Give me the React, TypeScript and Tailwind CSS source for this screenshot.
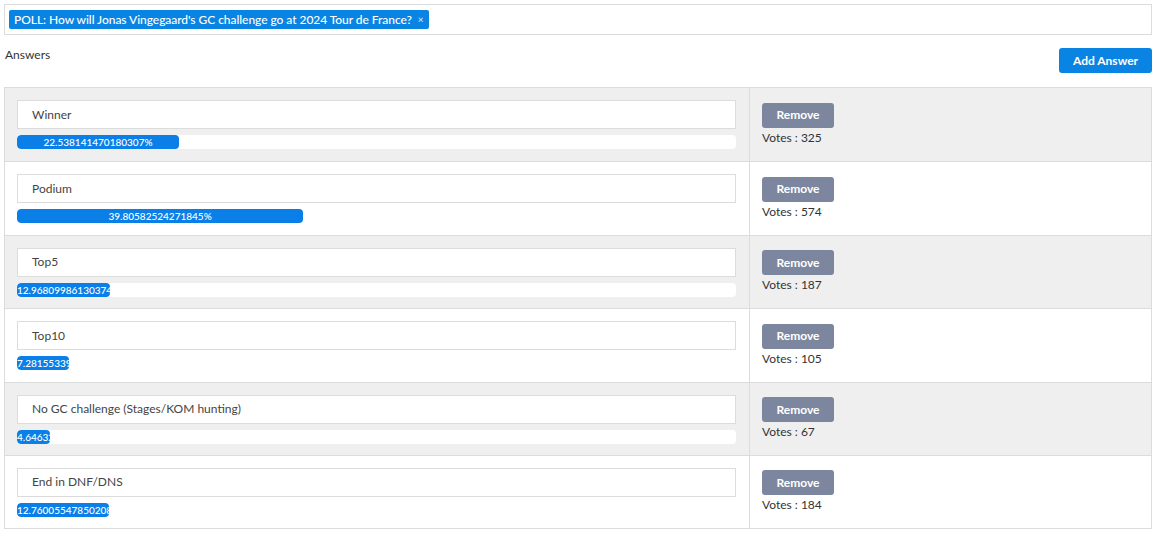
import React from "react";

const rows = [
  { label: "Winner", pct: 22.538141470180307, text: "22.538141470180307%", votes: 325 },
  { label: "Podium", pct: 39.80582524271845, text: "39.80582524271845%", votes: 574 },
  { label: "Top5", pct: 12.968099861303745, text: "12.968099861303745", votes: 187 },
  { label: "Top10", pct: 7.281553398058252, text: "7.281553398058252", votes: 105 },
  { label: "No GC challenge (Stages/KOM hunting)", pct: 4.646324549237171, text: "4.646324549237171", votes: 67 },
  { label: "End in DNF/DNS", pct: 12.760055478502081, text: "12.760055478502081", votes: 184 },
];

export default function App() {
  return (
    <div className="w-[1165px] h-[539px] bg-white text-[#333] overflow-hidden" style={{ fontFamily: 'Lato, "Noto Sans", sans-serif' }}>
      <div className="pl-[4px] pr-[13px] pt-[4px]">
        <div className="h-[31px] border border-[#dcdcdc] flex items-center px-[4px]">
          <span className="bg-[#0a84e3] text-white text-[12px] font-medium leading-[19px] h-[19px] pl-[5px] pr-[5px] rounded-[2px] flex items-center gap-[6px]">
            <span className="tracking-[-0.05px]">POLL: How will Jonas Vingegaard's GC challenge go at 2024 Tour de France?</span>
            <span className="text-[10px] text-[#cfe6fb]">×</span>
          </span>
        </div>
        <div className="flex justify-between items-start mt-[13px]">
          <div className="text-[12px] pl-[1px] leading-[14px]">Answers</div>
          <button className="w-[93px] h-[25px] bg-[#0a84e3] text-white text-[12px] font-bold rounded-[3px]">Add Answer</button>
        </div>
        <div className="mt-[14px] border border-[#dcdcdc]">
          {rows.map((r, i) => (
            <div key={i} className={`flex h-[73.4px] ${i > 0 ? "border-t border-[#dcdcdc]" : ""} ${i % 2 === 0 ? "bg-[#efefef]" : "bg-white"}`}>
              <div className="w-[745px] border-r border-[#dcdcdc] pl-[12px] pr-[13px] pt-[12px]">
                <div className="h-[29px] bg-white border border-[#dcdcdc] flex items-center pl-[14px] text-[12px] text-[#444]">{r.label}</div>
                <div className="mt-[6px] h-[14px] bg-white rounded-[4px] overflow-hidden flex">
                  <div className="h-full bg-[#0a7fe8] text-white text-[10px] font-medium leading-[14px] text-center whitespace-nowrap overflow-hidden rounded-[4px]" style={{ width: `${r.pct}%` }}>
                    {r.text}
                  </div>
                </div>
              </div>
              <div className="flex-1 pl-[12px] pt-[13px]">
                <button className="w-[72px] h-[25px] bg-[#7c879f] text-white text-[12px] font-bold rounded-[3px]">Remove</button>
                <div className="text-[12px] mt-[1px] text-[#333]">Votes : {r.votes}</div>
              </div>
            </div>
          ))}
        </div>
      </div>
    </div>
  );
}
